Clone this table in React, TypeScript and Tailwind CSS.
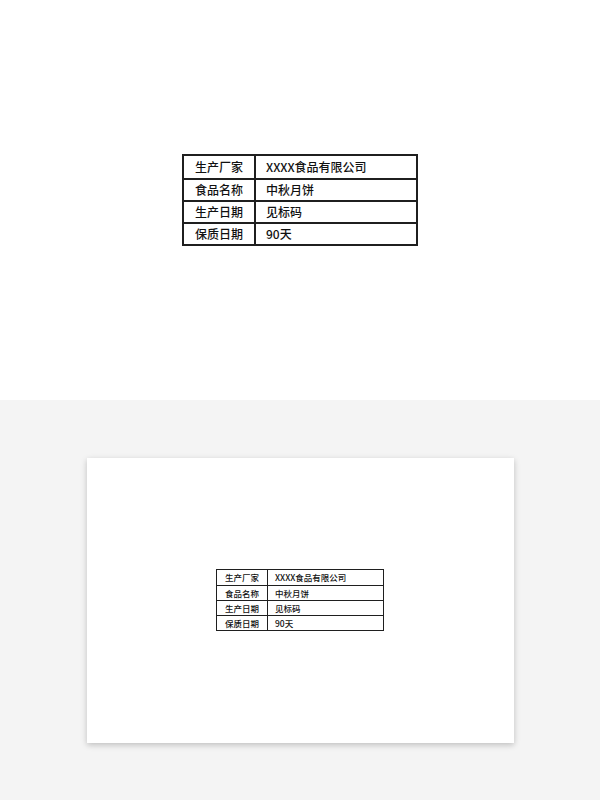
import React from 'react'

type Row = { label: string, value: string }

const rows: Row[] = [
  { label: '生产厂家', value: 'XXXX食品有限公司' },
  { label: '食品名称', value: '中秋月饼' },
  { label: '生产日期', value: '见标码' },
  { label: '保质日期', value: '90天' },
]

const font = { fontFamily: '"Noto Sans CJK SC", "Noto Sans", sans-serif' }

const BigTable: React.FC = () => (
  <div className="w-[236px] border-2 border-[#1f1f1f] text-[12px] font-medium text-[#111]" style={font}>
    {rows.map((r, i) => (
      <div key={r.label} className={`flex h-[22px] items-center ${i > 0 ? 'border-t-2 border-[#1f1f1f]' : ''}`}>
        <div className="flex h-full w-[72px] items-center justify-center border-r-2 border-[#1f1f1f]">{r.label}</div>
        <div className="pl-[10px]">{r.value}</div>
      </div>
    ))}
  </div>
)

const SmallTable: React.FC = () => (
  <div className="w-[168px] border border-[#1f1f1f] text-[8.5px] font-medium text-[#111]" style={font}>
    {rows.map((r, i) => (
      <div key={r.label} className={`flex h-[15px] items-center ${i > 0 ? 'border-t border-[#1f1f1f]' : ''}`}>
        <div className="flex h-full w-[51px] items-center justify-center border-r border-[#1f1f1f]">{r.label}</div>
        <div className="pl-[7px]">{r.value}</div>
      </div>
    ))}
  </div>
)

export default function App() {
  return (
    <div className="w-[600px] h-[800px]">
      <div className="flex h-[400px] items-center justify-center bg-white">
        <BigTable />
      </div>
      <div className="flex h-[400px] items-center justify-center bg-[#f4f4f4]">
        <div className="flex h-[285px] w-[427px] items-center justify-center bg-white shadow-[0_2px_6px_rgba(0,0,0,0.22)]">
          <SmallTable />
        </div>
      </div>
    </div>
  )
}
